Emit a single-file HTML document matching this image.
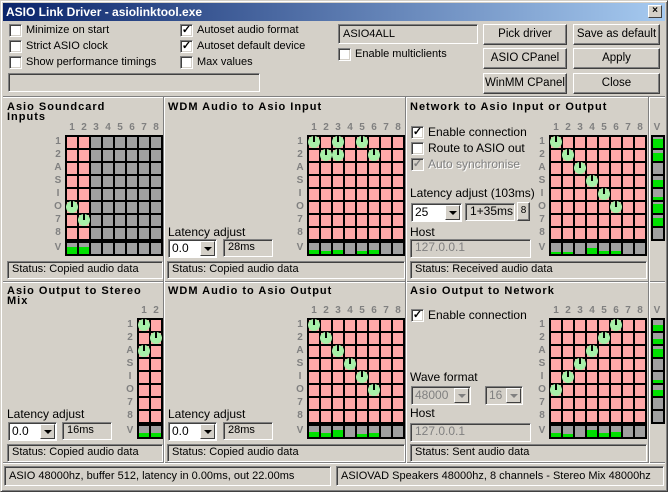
<!DOCTYPE html>
<html><head><meta charset="utf-8">
<style>
*{box-sizing:border-box;margin:0;padding:0}
body{width:668px;height:492px;background:#d4d0c8;font-family:"Liberation Sans",sans-serif;font-size:11px;color:#000;position:relative;overflow:hidden}
.a{position:absolute;white-space:nowrap}
.win{position:absolute;left:0;top:0;width:668px;height:492px;border:1px solid;border-color:#d4d0c8 #404040 #404040 #d4d0c8;box-shadow:inset 1px 1px 0 #fff,inset -1px -1px 0 #808080}
.title{position:absolute;left:3px;top:3px;width:662px;height:18px;background:linear-gradient(90deg,#0a246a,#a6caf0);color:#fff;font-weight:bold;font-size:12px;line-height:18px;padding-left:3px}
.xb{position:absolute;right:3px;top:2px;width:14px;height:13px;background:#d4d0c8;border:1px solid;border-color:#fff #404040 #404040 #fff;font-size:10px;line-height:10px;text-align:center;color:#000;font-weight:bold}
.cb{position:absolute;width:13px;height:13px;background:#fff;border:1px solid;border-color:#808080 #fff #fff #808080;box-shadow:inset 1px 1px 0 #404040,inset -1px -1px 0 #d4d0c8;font-size:11px;line-height:10px;text-align:center;font-weight:bold}
.cb.d{background:#d4d0c8;color:#808080}
.sunk{position:absolute;border:1px solid;border-color:#808080 #fff #fff #808080;box-shadow:inset 1px 1px 0 #404040;padding-left:4px;line-height:15px;white-space:nowrap}
.btn{position:absolute;border:1px solid;border-color:#fff #404040 #404040 #fff;box-shadow:inset -1px -1px 0 #808080;text-align:center;line-height:18px;font-size:11.5px;white-space:nowrap}
.vl{position:absolute;width:2px;border-left:1px solid #808080;border-right:1px solid #fff}
.hl{position:absolute;height:2px;border-top:1px solid #808080;border-bottom:1px solid #fff}
.pt{position:absolute;font-weight:bold;font-size:11px;letter-spacing:1px;line-height:10px;white-space:nowrap}
.cmb{position:absolute;background:#fff;border:1px solid;border-color:#808080 #fff #fff #808080;box-shadow:inset 1px 1px 0 #404040;line-height:16px;padding-left:3px;font-size:12px}
.cmb.d{background:#d4d0c8;color:#808080}
.arr{position:absolute;right:1px;top:1px;width:15px;bottom:1px;background:#d4d0c8;border:1px solid;border-color:#fff #404040 #404040 #fff}
.arr:after{content:"";position:absolute;left:3px;top:5px;border:4px solid transparent;border-top:4px solid #000;border-bottom:0}
.arr.d:after{border-top-color:#808080}
.grid{position:absolute;background:#000}
.c{position:absolute;width:10px;height:11px;background:#ffa8a8}
.c.g{background:#a0a0a0}
.gb{position:absolute;left:0;right:0;bottom:0;background:#00e000}
.kn{position:absolute;width:12px;height:12px;border-radius:50%;background:#a8f0a8}
.kn:after{content:"";position:absolute;left:5px;top:0;width:2px;height:6px;background:#000}
.rl{position:absolute;width:12px;text-align:center;color:#808080;font-weight:bold;font-size:10px;line-height:13px}
.ch{position:absolute;color:#808080;font-weight:bold;font-size:10px;line-height:10px;white-space:nowrap}
.ch span{display:inline-block;width:12px;text-align:center}
.dis{color:#808080;text-shadow:1px 1px 0 #fff}
</style></head><body>
<div class="win"></div>
<div class="title">ASIO Link Driver - asiolinktool.exe<div class="xb">×</div></div>

<div class="cb" style="left:9px;top:24px"></div><div class="a" style="left:26px;top:24px">Minimize on start</div>
<div class="cb" style="left:9px;top:40px"></div><div class="a" style="left:26px;top:40px">Strict ASIO clock</div>
<div class="cb" style="left:9px;top:56px"></div><div class="a" style="left:26px;top:56px">Show performance timings</div>
<div class="cb" style="left:180px;top:24px">✓</div><div class="a" style="left:197px;top:24px">Autoset audio format</div>
<div class="cb" style="left:180px;top:40px">✓</div><div class="a" style="left:197px;top:40px">Autoset default device</div>
<div class="cb" style="left:180px;top:56px"></div><div class="a" style="left:197px;top:56px">Max values</div>
<div class="sunk" style="left:8px;top:73px;width:252px;height:19px"></div>
<div class="sunk" style="left:338px;top:24px;width:140px;height:20px;line-height:18px">ASIO4ALL</div>
<div class="cb" style="left:338px;top:48px"></div><div class="a" style="left:355px;top:48px">Enable multiclients</div>
<div class="btn" style="left:483px;top:24px;width:84px;height:21px">Pick driver</div>
<div class="btn" style="left:573px;top:24px;width:87px;height:21px">Save as default</div>
<div class="btn" style="left:483px;top:48px;width:84px;height:21px">ASIO CPanel</div>
<div class="btn" style="left:573px;top:48px;width:87px;height:21px">Apply</div>
<div class="btn" style="left:483px;top:73px;width:84px;height:21px">WinMM CPanel</div>
<div class="btn" style="left:573px;top:73px;width:87px;height:21px">Close</div>

<div class="hl" style="left:3px;top:96px;width:662px"></div>
<div class="hl" style="left:3px;top:281px;width:662px"></div>
<div class="hl" style="left:3px;top:462px;width:662px"></div>
<div class="vl" style="left:163px;top:97px;height:366px"></div>
<div class="vl" style="left:405px;top:97px;height:366px"></div>
<div class="vl" style="left:648px;top:97px;height:366px"></div>

<div class="pt" style="left:7px;top:102px">Asio Soundcard<br>Inputs</div>
<div class="pt" style="left:168px;top:102px">WDM Audio to Asio Input</div>
<div class="pt" style="left:410px;top:102px">Network to Asio Input or Output</div>
<div class="pt" style="left:7px;top:286px">Asio Output to Stereo<br>Mix</div>
<div class="pt" style="left:168px;top:286px">WDM Audio to Asio Output</div>
<div class="pt" style="left:410px;top:286px">Asio Output to Network</div>

<div class="sunk" style="left:7px;top:261px;width:156px;height:18px">Status: Copied audio data</div>
<div class="sunk" style="left:167px;top:261px;width:238px;height:18px">Status: Copied audio data</div>
<div class="sunk" style="left:410px;top:261px;width:237px;height:18px">Status: Received audio data</div>
<div class="sunk" style="left:7px;top:444px;width:156px;height:18px">Status: Copied audio data</div>
<div class="sunk" style="left:167px;top:444px;width:238px;height:18px">Status: Copied audio data</div>
<div class="sunk" style="left:410px;top:444px;width:237px;height:18px">Status: Sent audio data</div>

<div class="a" style="left:168px;top:225px;font-size:12px">Latency adjust</div>
<div class="cmb" style="left:168px;top:239px;width:49px;height:19px">0.0<div class="arr"></div></div>
<div class="sunk" style="left:223px;top:239px;width:50px;height:18px">28ms</div>
<div class="a" style="left:7px;top:407px;font-size:12px">Latency adjust</div>
<div class="cmb" style="left:8px;top:422px;width:49px;height:19px">0.0<div class="arr"></div></div>
<div class="sunk" style="left:62px;top:422px;width:50px;height:18px">16ms</div>
<div class="a" style="left:168px;top:407px;font-size:12px">Latency adjust</div>
<div class="cmb" style="left:168px;top:422px;width:49px;height:19px">0.0<div class="arr"></div></div>
<div class="sunk" style="left:223px;top:422px;width:50px;height:18px">28ms</div>

<div class="cb" style="left:411px;top:126px">✓</div><div class="a" style="left:428px;top:125px;font-size:12px">Enable connection</div>
<div class="cb" style="left:411px;top:142px"></div><div class="a" style="left:428px;top:141px;font-size:12px">Route to ASIO out</div>
<div class="cb d" style="left:411px;top:158px">✓</div><div class="a dis" style="left:428px;top:157px;font-size:12px">Auto synchronise</div>
<div class="a" style="left:410px;top:186px;font-size:12px">Latency adjust (103ms)</div>
<div class="cmb" style="left:411px;top:203px;width:51px;height:19px">25<div class="arr"></div></div>
<div class="sunk" style="left:465px;top:203px;width:50px;height:18px;font-size:12px">1+35ms</div>
<div class="btn" style="left:517px;top:202px;width:13px;height:19px;font-size:10px;line-height:16px">8</div>
<div class="a" style="left:410px;top:225px;font-size:12px">Host</div>
<div class="sunk" style="left:410px;top:239px;width:121px;height:19px;font-size:12px;color:#808080">127.0.0.1</div>

<div class="cb" style="left:411px;top:309px">✓</div><div class="a" style="left:428px;top:308px;font-size:12px">Enable connection</div>
<div class="a" style="left:410px;top:370px;font-size:12px">Wave format</div>
<div class="cmb d" style="left:411px;top:386px;width:60px;height:19px">48000<div class="arr d"></div></div>
<div class="cmb d" style="left:485px;top:386px;width:38px;height:19px">16<div class="arr d"></div></div>
<div class="a" style="left:410px;top:406px;font-size:12px">Host</div>
<div class="sunk" style="left:410px;top:423px;width:121px;height:19px;font-size:12px;color:#808080">127.0.0.1</div>

<div class="sunk" style="left:4px;top:466px;width:327px;height:20px;line-height:18px">ASIO 48000hz, buffer 512, latency in 0.00ms, out 22.00ms</div>
<div class="sunk" style="left:336px;top:466px;width:328px;height:20px;line-height:18px">ASIOVAD Speakers 48000hz, 8 channels - Stereo Mix 48000hz</div>

<div class="ch" style="left:66px;top:123px"><span>1</span><span>2</span><span>3</span><span>4</span><span>5</span><span>6</span><span>7</span><span>8</span></div>
<div class="ch" style="left:308px;top:123px"><span>1</span><span>2</span><span>3</span><span>4</span><span>5</span><span>6</span><span>7</span><span>8</span></div>
<div class="ch" style="left:550px;top:123px"><span>1</span><span>2</span><span>3</span><span>4</span><span>5</span><span>6</span><span>7</span><span>8</span><span style="margin-left:5px">V</span></div>
<div class="ch" style="left:138px;top:306px"><span>1</span><span>2</span></div>
<div class="ch" style="left:308px;top:306px"><span>1</span><span>2</span><span>3</span><span>4</span><span>5</span><span>6</span><span>7</span><span>8</span></div>
<div class="ch" style="left:550px;top:306px"><span>1</span><span>2</span><span>3</span><span>4</span><span>5</span><span>6</span><span>7</span><span>8</span><span style="margin-left:5px">V</span></div>

<div class="rl" style="left:52px;top:135px">1<br>2<br>A<br>S<br>I<br>O<br>7<br>8<br><span style="position:relative;top:2px">V</span></div>
<div class="rl" style="left:294px;top:135px">1<br>2<br>A<br>S<br>I<br>O<br>7<br>8<br><span style="position:relative;top:2px">V</span></div>
<div class="rl" style="left:536px;top:135px">1<br>2<br>A<br>S<br>I<br>O<br>7<br>8<br><span style="position:relative;top:2px">V</span></div>
<div class="rl" style="left:124px;top:318px">1<br>2<br>A<br>S<br>I<br>O<br>7<br>8<br><span style="position:relative;top:2px">V</span></div>
<div class="rl" style="left:294px;top:318px">1<br>2<br>A<br>S<br>I<br>O<br>7<br>8<br><span style="position:relative;top:2px">V</span></div>
<div class="rl" style="left:536px;top:318px">1<br>2<br>A<br>S<br>I<br>O<br>7<br>8<br><span style="position:relative;top:2px">V</span></div>

<div id="g"></div>
<script>
var G=document.getElementById('g');
function el(cls,st,p){var d=document.createElement('div');d.className=cls;d.style.cssText=st;(p||G).appendChild(d);return d;}
function grid(px,py,cols,knobs,grayFrom,vb){
 var g=el('grid','left:'+px+'px;top:'+py+'px;width:'+(cols*12+2)+'px;height:106px');
 for(var r=0;r<8;r++)for(var c=0;c<cols;c++){
  el('c'+(c>=grayFrom?' g':''),'left:'+(2+c*12)+'px;top:'+(2+r*13)+'px',g);}
 knobs.forEach(function(k){el('kn','left:'+(1+k[1]*12)+'px;top:'+(1+k[0]*13)+'px',g);});
 var v=el('grid','left:'+px+'px;top:'+(py+106)+'px;width:'+(cols*12+2)+'px;height:15px');
 for(var c=0;c<cols;c++){var cc=el('c g','left:'+(2+c*12)+'px;top:2px',v);if(vb[c])el('gb','height:'+vb[c]+'px',cc);}
}
function vbar(px,py,vals){
 var g=el('grid','left:'+px+'px;top:'+py+'px;width:14px;height:106px');
 for(var r=0;r<8;r++){var cc=el('c g','left:2px;top:'+(2+r*13)+'px',g);if(vals[r])el('gb','height:'+vals[r]+'px',cc);}
}
grid(65,135,8,[[5,0],[6,1]],2,[7,7]);
grid(307,135,8,[[0,0],[0,2],[0,4],[1,1],[1,2],[1,5]],8,[4,3,4,0,3,4]);
grid(549,135,8,[[0,0],[1,1],[2,2],[3,3],[4,4],[5,5]],8,[2,2,0,6,3,3]);
vbar(651,135,[9,8,0,7,3,9,8,0]);
grid(137,318,2,[[0,0],[1,1],[2,0]],2,[4,4]);
grid(307,318,8,[[0,0],[1,1],[2,2],[3,3],[4,4],[5,5]],8,[5,4,7,0,3,4]);
grid(549,318,8,[[0,5],[1,4],[2,3],[3,2],[4,1],[5,0]],8,[4,3,0,7,4,5]);
vbar(651,318,[6,5,8,0,3,6,0,0]);
</script>
</body></html>
